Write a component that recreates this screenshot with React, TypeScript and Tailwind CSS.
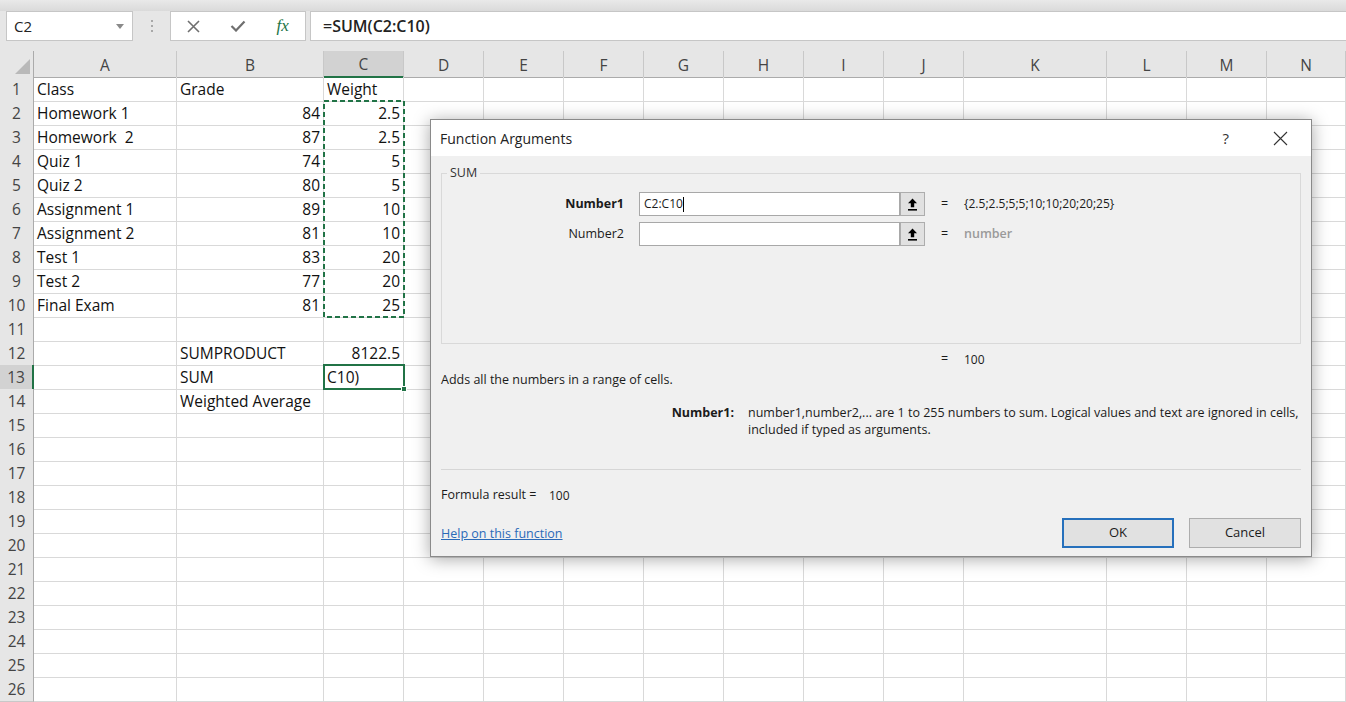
import React from "react";

const cols = ["A", "B", "C", "D", "E", "F", "G", "H", "I", "J", "K", "L", "M", "N"];

type Cell = { v: string; right?: boolean };

const data: Record<number, Record<string, Cell>> = {
  1: { A: { v: "Class" }, B: { v: "Grade" }, C: { v: "Weight" } },
  2: { A: { v: "Homework 1" }, B: { v: "84", right: true }, C: { v: "2.5", right: true } },
  3: { A: { v: "Homework  2" }, B: { v: "87", right: true }, C: { v: "2.5", right: true } },
  4: { A: { v: "Quiz 1" }, B: { v: "74", right: true }, C: { v: "5", right: true } },
  5: { A: { v: "Quiz 2" }, B: { v: "80", right: true }, C: { v: "5", right: true } },
  6: { A: { v: "Assignment 1" }, B: { v: "89", right: true }, C: { v: "10", right: true } },
  7: { A: { v: "Assignment 2" }, B: { v: "81", right: true }, C: { v: "10", right: true } },
  8: { A: { v: "Test 1" }, B: { v: "83", right: true }, C: { v: "20", right: true } },
  9: { A: { v: "Test 2" }, B: { v: "77", right: true }, C: { v: "20", right: true } },
  10: { A: { v: "Final Exam" }, B: { v: "81", right: true }, C: { v: "25", right: true } },
  12: { B: { v: "SUMPRODUCT" }, C: { v: "8122.5", right: true } },
  13: { B: { v: "SUM" }, C: { v: "C10)" } },
  14: { B: { v: "Weighted Average" } },
};

const rows = Array.from({ length: 26 }, (_, i) => i + 1);

function RefButton() {
  return (
    <div className="w-[25px] h-[24px] bg-[#e1e1e1] border border-[#adadad] flex items-center justify-center">
      <svg width="11" height="13" viewBox="0 0 11 13">
        <path d="M5.5 0.5 L10 5.2 H7.2 V9.3 H3.8 V5.2 H1 Z" fill="#000" />
        <rect x="1" y="11" width="9" height="1.6" fill="#000" />
      </svg>
    </div>
  );
}

function FormulaBar() {
  return (
    <div className="h-[51px] bg-[#e6e6e6] flex flex-col">
      <div className="h-[11px] bg-gradient-to-b from-[#e9e9e9] to-[#dadada]" />
      <div className="h-[30px] flex">
        <div className="ml-[6px] w-[127px] bg-white border border-[#c6c6c6] flex items-center pl-[7px] pr-[8px] text-[15px] text-[#222]">
          C2
          <svg className="ml-auto" width="8" height="5" viewBox="0 0 8 5">
            <path d="M0 0 H8 L4 5 Z" fill="#8a8a8a" />
          </svg>
        </div>
        <div className="w-[37px] flex flex-col items-center justify-center gap-[3px]">
          <span className="w-[2px] h-[2px] bg-[#a8a8a8]" />
          <span className="w-[2px] h-[2px] bg-[#a8a8a8]" />
          <span className="w-[2px] h-[2px] bg-[#a8a8a8]" />
        </div>
        <div className="w-[136px] bg-white border border-[#c6c6c6] flex">
          <div className="w-[45px] flex items-center justify-center">
            <svg width="13" height="13" viewBox="0 0 13 13">
              <path d="M1 1 L12 12 M12 1 L1 12" stroke="#6f6f6f" strokeWidth="1.6" />
            </svg>
          </div>
          <div className="w-[45px] flex items-center justify-center">
            <svg width="16" height="12" viewBox="0 0 16 12">
              <path d="M1.5 6 L6 10.5 L14.5 1.5" stroke="#6f6f6f" strokeWidth="2.2" fill="none" />
            </svg>
          </div>
          <div className="w-[45px] flex items-center justify-center font-['Liberation_Serif',serif] italic text-[17px] text-[#217346]">
            fx
          </div>
        </div>
        <div className="ml-[4px] flex-1 bg-white border border-[#c6c6c6] border-r-0 flex items-center pl-[12px] text-[16px] font-semibold text-[#222]">
          =SUM(C2:C10)
        </div>
      </div>
    </div>
  );
}

function Sheet() {
  return (
    <div className="relative">
      <div className="grid grid-cols-[34px_143px_147px_80px_80px_80px_80px_80px_80px_80px_80px_143px_80px_80px_79px] h-[26px] bg-[#e6e6e6]">
        <div className="border-r border-b border-[#ababab] flex items-end justify-end pr-[3px] pb-[3px]">
          <svg width="15" height="15" viewBox="0 0 15 15">
            <path d="M15 0 V15 H0 Z" fill="#b9b9b9" />
          </svg>
        </div>
        {cols.map((c) => (
          <div
            key={c}
            className={
              c === "C"
                ? "bg-[#d2d2d2] border-r border-[#c8c8c8] border-b-2 border-b-[#217346] flex items-center justify-center pt-[2px] text-[#444]"
                : "border-r border-[#c8c8c8] border-b border-b-[#ababab] flex items-center justify-center pt-[2px] text-[#444]"
            }
          >
            {c}
          </div>
        ))}
      </div>
      {rows.map((r) => (
        <div
          key={r}
          className="grid grid-cols-[34px_143px_147px_80px_80px_80px_80px_80px_80px_80px_80px_143px_80px_80px_79px] h-6"
        >
          <div
            className={
              r === 13
                ? "bg-[#d2d2d2] border-b border-[#c8c8c8] border-r-2 border-r-[#217346] flex items-center justify-center pt-px text-[#444]"
                : "bg-[#e6e6e6] border-b border-[#c8c8c8] border-r border-r-[#ababab] flex items-center justify-center pt-px text-[#444]"
            }
          >
            {r}
          </div>
          {cols.map((c) => {
            const cell = data[r]?.[c];
            return (
              <div
                key={c}
                className={
                  cell?.right
                    ? "border-r border-b border-[#d9d9d9] flex items-center justify-end pr-[3px] pt-px whitespace-pre text-[#111]"
                    : "border-r border-b border-[#d9d9d9] flex items-center pl-[3px] pt-px whitespace-pre text-[#111]"
                }
              >
                {cell?.v}
              </div>
            );
          })}
        </div>
      ))}

      {/* copy marquee around C2:C10 */}
      <svg className="absolute left-[323px] top-[49px]" width="82" height="218" viewBox="0 0 82 218">
        <rect x="1" y="1" width="80" height="216" fill="none" stroke="#217346" strokeWidth="2" strokeDasharray="5 3" />
      </svg>

      {/* active cell C13 */}
      <div className="absolute left-[323px] top-[313px] w-[82px] h-[26px] border-2 border-[#217346]" />
      <div className="absolute left-[401px] top-[335px] w-[6px] h-[6px] bg-[#217346] border border-white" />
    </div>
  );
}

function FunctionArguments() {
  return (
    <div className="absolute left-[430px] top-[119px] w-[882px] h-[438px] border border-[#8a8a8a] bg-[#f0f0f0] shadow-[0_2px_16px_rgba(0,0,0,0.35)] flex flex-col text-[12.5px] text-[#1b1b1b]">
      <div className="h-[36px] bg-white flex items-center pl-[9px] pr-[23px]">
        <span className="text-[14px] text-[#222]">Function Arguments</span>
        <span className="ml-auto mr-[44px] text-[15px] text-[#333]">?</span>
        <svg width="15" height="15" viewBox="0 0 15 15">
          <path d="M1 1 L14 14 M14 1 L1 14" stroke="#333" strokeWidth="1.1" />
        </svg>
      </div>

      <div className="px-[10px] flex flex-col">
        <fieldset className="mt-[9px] h-[179px] border border-[#d9d9d9]">
          <legend className="ml-[5px] px-[3px] leading-[16px] text-[#333]">SUM</legend>
          <div className="pt-[11px] flex flex-col gap-[6px]">
            <div className="flex items-center">
              <div className="w-[182px] text-right font-bold">Number1</div>
              <div className="ml-[15px] w-[261px] h-[24px] bg-white border border-[#a8a8a8] flex items-center pl-[4px] text-[12px]">
                C2:C10
                <span className="inline-block w-px h-[15px] bg-black" />
              </div>
              <RefButton />
              <div className="w-[39px] text-center">=</div>
              <div className="text-[12px]">{"{2.5;2.5;5;5;10;10;20;20;25}"}</div>
            </div>
            <div className="flex items-center">
              <div className="w-[182px] text-right">Number2</div>
              <div className="ml-[15px] w-[261px] h-[24px] bg-white border border-[#a8a8a8]" />
              <RefButton />
              <div className="w-[39px] text-center">=</div>
              <div className="font-semibold text-[#9a9a9a]">number</div>
            </div>
          </div>
        </fieldset>

        <div className="mt-[7px] h-[17px] flex items-center">
          <div className="w-[484px]" />
          <div className="w-[39px] text-center">=</div>
          <div className="text-[12px]">100</div>
        </div>

        <div className="mt-[4px] h-[17px] flex items-center">Adds all the numbers in a range of cells.</div>

        <div className="mt-[15px] flex leading-[17px]">
          <div className="w-[293px] text-right font-bold">Number1:</div>
          <div className="ml-[14px] whitespace-nowrap">
            number1,number2,... are 1 to 255 numbers to sum. Logical values and text are ignored in cells,
            <br />
            included if typed as arguments.
          </div>
        </div>

        <div className="mt-[31px] border-t border-[#d6d6d6]" />

        <div className="mt-[17px] h-[17px] flex items-center">
          <span className="w-[108px]">Formula result =</span>
          <span className="text-[12px]">100</span>
        </div>

        <div className="mt-[14px] h-[30px] flex items-center">
          <span className="pt-[2px] text-[#2a6ab8] underline">Help on this function</span>
          <button className="ml-auto w-[112px] h-[30px] bg-[#e1e1e1] border-2 border-[#2670bc] text-[13px]">OK</button>
          <button className="ml-[15px] w-[112px] h-[30px] bg-[#e1e1e1] border border-[#adadad] text-[13px]">Cancel</button>
        </div>
      </div>
    </div>
  );
}

export default function App() {
  return (
    <div className="relative w-[1346px] h-[702px] overflow-hidden bg-white font-['Open_Sans',sans-serif] text-[15.5px]">
      <FormulaBar />
      <Sheet />
      <FunctionArguments />
    </div>
  );
}
